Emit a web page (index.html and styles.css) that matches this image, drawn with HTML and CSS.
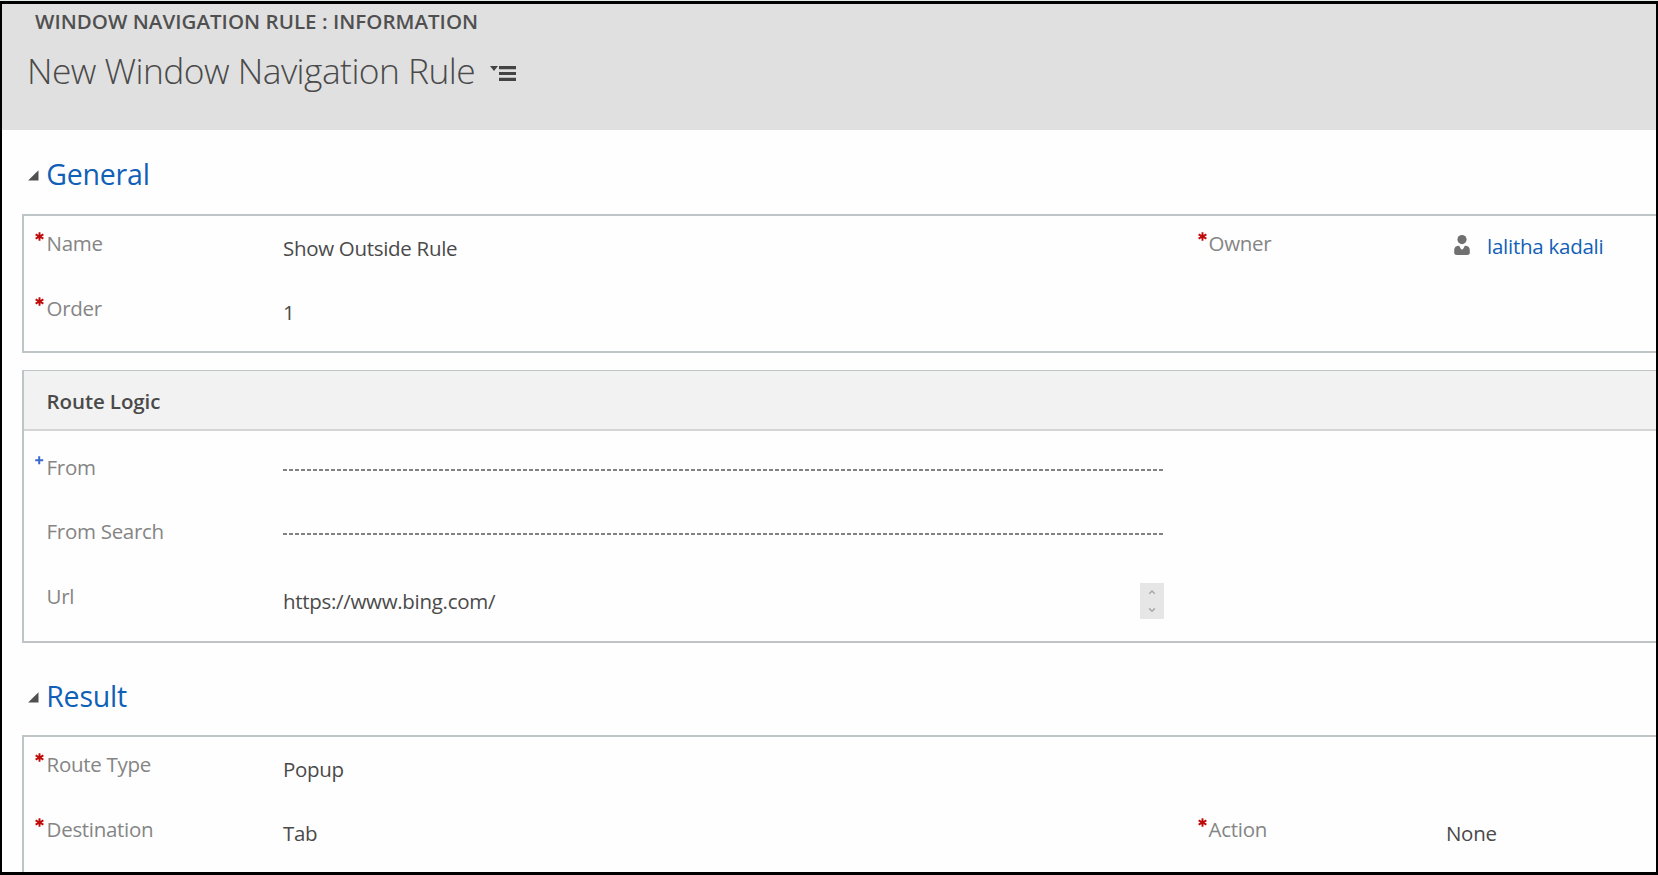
FILE: index.html
```html
<!DOCTYPE html>
<html lang="en">
<head>
<meta charset="utf-8">
<title>New Window Navigation Rule</title>
<link rel="stylesheet" href="styles.css">
</head>
<body>
<svg class="defs" aria-hidden="true">
  <symbol id="required" viewBox="0 0 9 9"><path d="M4.5 0.3V8.7M0.6 2.4L8.4 6.6M8.4 2.4L0.6 6.6" stroke="#c00a0a" stroke-width="1.9" fill="none"/></symbol>
  <symbol id="recommended" viewBox="0 0 9 9"><path d="M4.2 0.3V8.3M0.2 4.3H8.2" stroke="#3b69cf" stroke-width="2" fill="none"/></symbol>
  <symbol id="collapse" viewBox="0 0 11 11"><path d="M10.5 0.3V10.5H0.1Z" fill="#505050"/></symbol>
</svg>
<div class="frame">
  <header class="header">
    <div class="entity">WINDOW NAVIGATION RULE : INFORMATION</div>
    <div class="title-row">
      <h1 class="title">New Window Navigation Rule</h1>
      <svg class="menu-icon" viewBox="0 0 26 15"><path d="M0 0H8L4 5Z M9 0H26V3.2H9Z M9 5.9H26V9.1H9Z M9 11.8H26V15H9Z" fill="#444"/></svg>
    </div>
  </header>
  <main>
    <h2 class="section first"><svg class="arrow"><use href="#collapse"/></svg>General</h2>
    <section class="panel">
      <div class="row">
        <svg class="mark"><use href="#required"/></svg>
        <div class="label">Name</div>
        <div class="value">Show Outside Rule</div>
        <svg class="mark right"><use href="#required"/></svg>
        <div class="label">Owner</div>
        <div class="value owner">
          <svg class="person" viewBox="0 0 16 20"><circle cx="8" cy="4.6" r="4.6" fill="#707070"/><path d="M0.2 18.4V15C0.2 12.2 2 10.7 5.2 10.7L6.6 13.4L8 14.8L9.4 13.4L10.8 10.7C14 10.7 15.8 12.2 15.8 15V18.4Q14.8 20 12.8 20H3.2Q1.2 20 0.2 18.4Z" fill="#707070"/></svg>
          <a class="link">lalitha kadali</a>
        </div>
      </div>
      <div class="row last">
        <svg class="mark"><use href="#required"/></svg>
        <div class="label">Order</div>
        <div class="value up">1</div>
      </div>
    </section>
    <section class="panel route">
      <h3 class="panel-title">Route Logic</h3>
      <div class="row short">
        <svg class="mark"><use href="#recommended"/></svg>
        <div class="label">From</div>
        <div class="dashes"></div>
      </div>
      <div class="row">
        <span></span>
        <div class="label">From Search</div>
        <div class="dashes"></div>
      </div>
      <div class="row tall">
        <span></span>
        <div class="label">Url</div>
        <div class="value url">
          <span>https://www.bing.com/</span>
          <svg class="spinner" viewBox="0 0 24 36"><path d="M0 0H24V36H0Z" fill="#e6e6e6"/><path d="M9.2 10.8L12 8L14.8 10.8M9.2 25.4L12 28.2L14.8 25.4" stroke="#a9a9a9" stroke-width="1.5" fill="none"/></svg>
        </div>
      </div>
    </section>
    <h2 class="section"><svg class="arrow"><use href="#collapse"/></svg>Result</h2>
    <section class="panel result">
      <div class="row">
        <svg class="mark"><use href="#required"/></svg>
        <div class="label">Route Type</div>
        <div class="value">Popup</div>
      </div>
      <div class="row last">
        <svg class="mark"><use href="#required"/></svg>
        <div class="label">Destination</div>
        <div class="value up">Tab</div>
        <svg class="mark right"><use href="#required"/></svg>
        <div class="label">Action</div>
        <div class="value up">None</div>
      </div>
    </section>
  </main>
</div>
</body>
</html>
```
FILE: styles.css
```css
* { box-sizing: border-box; }
html { background: #e6ede9; }
body {
  margin: 0;
  padding-top: 1px;
  height: 875px;
  overflow: hidden;
  font-family: "Open Sans", "Noto Sans", sans-serif;
  font-size: 20.5px;
  line-height: 28px;
  letter-spacing: -0.3px;
  color: #4a4a4a;
}
.defs { display: block; width: 0; height: 0; }
.frame {
  height: 874px;
  border: solid #000;
  border-width: 3px 2px;
  background: #fefefe;
  overflow: hidden;
}
.header { height: 126px; padding-top: 3px; background: #e0e0e0; }
.entity { padding-left: 33px; font-weight: 600; letter-spacing: 0.03px; color: #505050; }
.title-row { display: flex; margin-top: 11px; padding-left: 25px; }
.title {
  margin: 0;
  width: 463px;
  font-size: 35.4px;
  font-weight: 300;
  line-height: 48px;
  letter-spacing: -0.55px;
  white-space: nowrap;
}
.menu-icon { width: 26px; height: 15px; margin-top: 20px; }
.section {
  display: flex;
  margin: 33px 0 19px;
  padding-left: 26px;
  font-size: 28.5px;
  font-weight: 400;
  line-height: 40px;
  letter-spacing: -0.2px;
  color: #1160b7;
}
.section.first { margin: 24px 0 20px; }
.arrow { width: 11px; height: 11px; margin: 15.5px 7.2px 0 0; }
.panel {
  margin-left: 20px;
  border: 2px solid #bfc4c7;
  border-right: 0;
}
.route { margin-top: 17px; border-top-width: 1px; }
.result { border-bottom: 0; }
.panel-title {
  height: 60px;
  margin: 0 0 9px;
  padding: 16px 0 0 22.6px;
  border-bottom: 2px solid #d5d5d5;
  background: #f2f2f2;
  font-size: 20.5px;
  font-weight: 600;
  letter-spacing: -0.1px;
}
.row {
  display: grid;
  grid-template-columns: 11.6px 236.4px 881px 44.6px 237.4px 1fr;
  align-items: start;
  height: 65px;
  padding-left: 11px;
}
.row.short { height: 64px; }
.row.last { height: 70px; }
.row.tall { height: 72px; }
.mark { width: 9px; height: 9px; margin-top: 15.5px; }
.mark.right { margin-left: 34px; }
.label { margin-top: 13px; color: #858585; }
.value { margin-top: 18px; }
.value.up { margin-top: 17px; }
.owner { display: flex; margin-top: 16px; padding-left: 8px; letter-spacing: -0.25px; }
.person { width: 16px; height: 20px; margin: 3px 17px 0 0; }
.link { color: #1160b7; white-space: nowrap; }
.dashes {
  height: 2px;
  margin-top: 29px;
  background: repeating-linear-gradient(90deg, #828282 0 4px, transparent 4px 6px);
}
.url { display: flex; justify-content: space-between; }
.spinner { width: 24px; height: 36px; margin-top: -4px; }
```
